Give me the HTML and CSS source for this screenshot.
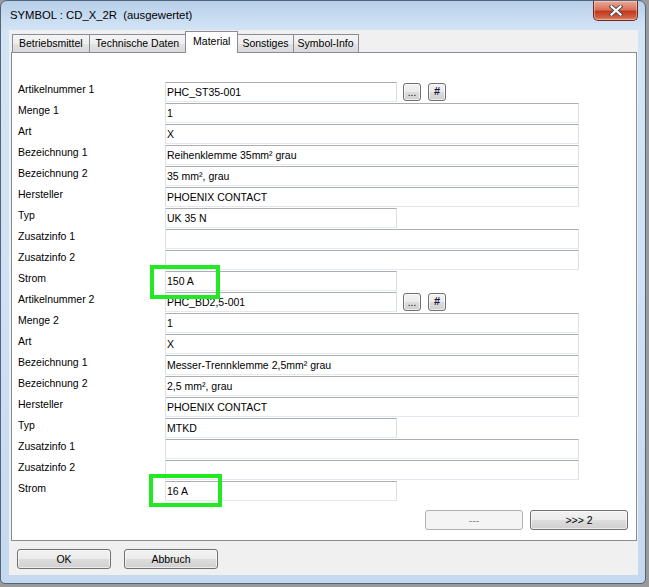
FILE: index.html
```html
<!DOCTYPE html>
<html>
<head>
<meta charset="utf-8">
<title>SYMBOL : CD_X_2R</title>
<link rel="stylesheet" href="styles.css">
</head>
<body>
<div class="window">
  <div class="titlebar">
    <span class="title">SYMBOL : CD_X_2R&nbsp; (ausgewertet)</span>
    <div class="close">
      <svg width="14" height="11" viewBox="0 0 14 11">
        <path d="M2.5 1.5 L11.5 9.5 M11.5 1.5 L2.5 9.5" stroke="#4a4a4a" stroke-width="4" stroke-linecap="square" fill="none"/>
        <path d="M2.5 1.5 L11.5 9.5 M11.5 1.5 L2.5 9.5" stroke="#ffffff" stroke-width="2.2" stroke-linecap="square" fill="none"/>
      </svg>
    </div>
  </div>
  <div class="client">
    <div class="tabs">
      <div class="tab">Betriebsmittel</div>
      <div class="tab">Technische Daten</div>
      <div class="tab active">Material</div>
      <div class="tab narrow">Sonstiges</div>
      <div class="tab narrow">Symbol-Info</div>
    </div>
    <div class="panel">
      <div class="form">
        <div class="row"><span class="label">Artikelnummer 1</span><div class="field short">PHC_ST35-001</div><div class="mini dots">...</div><div class="mini hash">#</div></div>
        <div class="row"><span class="label">Menge 1</span><div class="field long">1</div></div>
        <div class="row"><span class="label">Art</span><div class="field long">X</div></div>
        <div class="row"><span class="label">Bezeichnung 1</span><div class="field long">Reihenklemme 35mm² grau</div></div>
        <div class="row"><span class="label">Bezeichnung 2</span><div class="field long">35 mm², grau</div></div>
        <div class="row"><span class="label">Hersteller</span><div class="field long">PHOENIX CONTACT</div></div>
        <div class="row"><span class="label">Typ</span><div class="field short">UK 35 N</div></div>
        <div class="row"><span class="label">Zusatzinfo 1</span><div class="field long"></div></div>
        <div class="row"><span class="label">Zusatzinfo 2</span><div class="field long"></div></div>
        <div class="row"><span class="label">Strom</span><div class="field short">150 A</div></div>
        <div class="row"><span class="label">Artikelnummer 2</span><div class="field short">PHC_BD2,5-001</div><div class="mini dots">...</div><div class="mini hash">#</div></div>
        <div class="row"><span class="label">Menge 2</span><div class="field long">1</div></div>
        <div class="row"><span class="label">Art</span><div class="field long">X</div></div>
        <div class="row"><span class="label">Bezeichnung 1</span><div class="field long">Messer-Trennklemme 2,5mm² grau</div></div>
        <div class="row"><span class="label">Bezeichnung 2</span><div class="field long">2,5 mm², grau</div></div>
        <div class="row"><span class="label">Hersteller</span><div class="field long">PHOENIX CONTACT</div></div>
        <div class="row"><span class="label">Typ</span><div class="field short">MTKD</div></div>
        <div class="row"><span class="label">Zusatzinfo 1</span><div class="field long"></div></div>
        <div class="row"><span class="label">Zusatzinfo 2</span><div class="field long"></div></div>
        <div class="row"><span class="label">Strom</span><div class="field short">16 A</div></div>
      </div>
      <div class="nav">
        <div class="btn navbtn disabled">---</div>
        <div class="btn navbtn">&gt;&gt;&gt; 2</div>
      </div>
    </div>
    <div class="footer">
      <div class="btn footbtn">OK</div>
      <div class="btn footbtn">Abbruch</div>
    </div>
  </div>
  <div class="hl hl1"></div>
  <div class="hl hl2"></div>
</div>
</body>
</html>
```
FILE: styles.css
```css
html, body {
  margin: 0;
  padding: 0;
}
body {
  width: 649px;
  height: 587px;
  background: #9a9a9a;
  font-family: "Liberation Sans", Arial, sans-serif;
  font-size: 10.5px;
  color: #000;
  overflow: hidden;
}
.window {
  position: relative;
  box-sizing: border-box;
  width: 646px;
  height: 584px;
  border: 1px solid #54657a;
  border-radius: 7px 7px 5px 5px;
  background: linear-gradient(to bottom, #b7cfe9 0px, #c9ddf2 18px, #d3e4f5 30px, #cfe1f4 300px, #c4d9ef 584px);
  display: flex;
  flex-direction: column;
}
.titlebar {
  height: 29px;
  display: flex;
  justify-content: space-between;
  align-items: flex-start;
}
.title {
  padding: 7px 0 0 9px;
  font-size: 11.3px;
  line-height: 14px;
  color: #000;
}
.close {
  width: 45px;
  height: 20px;
  margin-right: 7px;
  box-sizing: border-box;
  border: 1px solid #6e2a1d;
  border-top: none;
  border-radius: 0 0 5px 5px;
  background: linear-gradient(to bottom, #e9a898 0%, #d9735c 45%, #c13a1f 55%, #cf5f40 85%, #e08a6c 100%);
  display: flex;
  align-items: center;
  justify-content: center;
  box-shadow: inset 0 0 0 1px rgba(255,255,255,0.35);
}
.client {
  margin: 0 7px 0 8px;
  height: 545px;
  background: #f0f0f0;
  display: flex;
  flex-direction: column;
}
.tabs {
  height: 22px;
  display: flex;
  align-items: flex-end;
  padding-left: 3px;
  position: relative;
  z-index: 1;
}
.tab {
  box-sizing: border-box;
  height: 18px;
  padding: 0 6px;
  border: 1px solid #898c95;
  border-bottom: none;
  border-right: none;
  background: linear-gradient(to bottom, #f4f4f4 0%, #eeeeee 50%, #e3e3e3 51%, #d9d9d9 100%);
  line-height: 16px;
  white-space: nowrap;
}
.tab.narrow {
  padding: 0 4px;
}
.tab:last-child {
  border-right: 1px solid #898c95;
}
.tab.active {
  height: 22px;
  margin-bottom: -1px;
  padding: 0 7px;
  background: #ffffff;
  line-height: 19px;
  border-right: 1px solid #898c95;
}
.tab.active + .tab {
  border-left: none;
}
.panel {
  box-sizing: border-box;
  height: 489px;
  margin: 0 1px 0 2px;
  border: 1px solid #898c95;
  background: #ffffff;
  padding: 29px 8px 0 6px;
  display: flex;
  flex-direction: column;
}
.form {
  display: flex;
  flex-direction: column;
  gap: 1px;
}
.row {
  display: flex;
  align-items: flex-start;
  height: 20px;
}
.label {
  width: 147px;
  flex: none;
  line-height: 15px;
  white-space: nowrap;
}
.field {
  box-sizing: border-box;
  height: 20px;
  border-top: 1px solid #abadb3;
  border-left: 1px solid #dbdfe6;
  border-right: 1px solid #dbdfe6;
  border-bottom: 1px solid #e3e9ef;
  padding: 1px 0 0 1px;
  line-height: 17px;
  white-space: nowrap;
  overflow: hidden;
  background: #fff;
}
.field.short { width: 232px; }
.field.long { width: 414px; }
.mini {
  box-sizing: border-box;
  width: 18px;
  height: 18px;
  margin-top: 1px;
  border: 1px solid #707070;
  border-radius: 3px;
  background: linear-gradient(to bottom, #f2f2f2 0%, #ebebeb 50%, #dddddd 51%, #cfcfcf 100%);
  text-align: center;
  box-shadow: inset 0 0 0 1px rgba(255,255,255,0.6);
}
.mini.dots {
  margin-left: 6px;
  line-height: 18px;
  font-size: 10px;
}
.mini.hash {
  margin-left: 7px;
  line-height: 15px;
  font-weight: bold;
  font-size: 11px;
  color: #1a1a40;
}
.nav {
  display: flex;
  justify-content: flex-end;
  gap: 7px;
  margin-top: 9px;
}
.btn {
  box-sizing: border-box;
  height: 20px;
  border: 1px solid #707070;
  border-radius: 3px;
  background: linear-gradient(to bottom, #f2f2f2 0%, #ebebeb 50%, #dddddd 51%, #cfcfcf 100%);
  box-shadow: inset 0 0 0 1px rgba(255,255,255,0.6);
  text-align: center;
  line-height: 18px;
  white-space: nowrap;
}
.navbtn {
  width: 98px;
}
.btn.disabled {
  border-color: #adb2b5;
  background: #f4f4f4;
  color: #8a8a8a;
  box-shadow: none;
}
.footer {
  display: flex;
  gap: 13px;
  padding: 8px 0 0 8px;
}
.footbtn {
  width: 94px;
}
.hl {
  position: absolute;
  box-sizing: border-box;
  border: 4px solid #22ea22;
  pointer-events: none;
}
.hl1 {
  left: 149px;
  top: 264px;
  width: 70px;
  height: 34px;
}
.hl2 {
  left: 148px;
  top: 473px;
  width: 73px;
  height: 33px;
}
```
